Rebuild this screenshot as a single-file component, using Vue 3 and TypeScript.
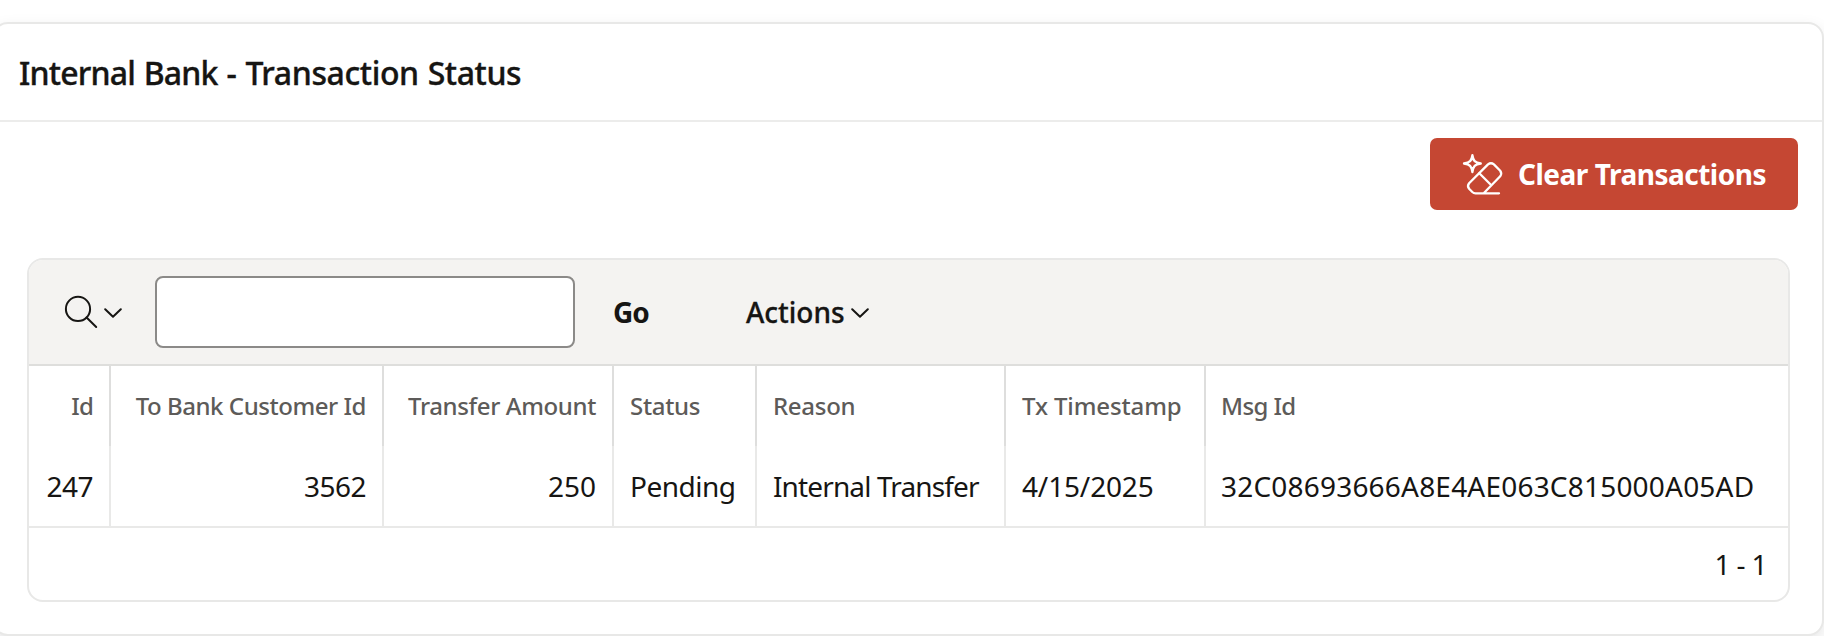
<script setup lang="ts">
interface Column {
  key: string
  label: string
  value: string
  numeric?: boolean
}

const columns: Column[] = [
  { key: 'id', label: 'Id', value: '247', numeric: true },
  { key: 'customer', label: 'To Bank Customer Id', value: '3562', numeric: true },
  { key: 'amount', label: 'Transfer Amount', value: '250', numeric: true },
  { key: 'status', label: 'Status', value: 'Pending' },
  { key: 'reason', label: 'Reason', value: 'Internal Transfer' },
  { key: 'timestamp', label: 'Tx Timestamp', value: '4/15/2025' },
  { key: 'msg', label: 'Msg Id', value: '32C08693666A8E4AE063C815000A05AD' },
]
</script>

<template>
  <main class="page">
    <section class="region">
      <header class="region-header">
        <h2><span class="bank">Internal Bank</span> - Transaction Status</h2>
      </header>
      <div class="region-actions">
        <button class="clear" type="button">
          <svg class="eraser" viewBox="0 0 44 44" aria-hidden="true">
            <path d="M12.4 2.2C13.3 8 14.8 9.6 20.8 10.5C14.8 11.4 13.3 13 12.4 19C11.5 13 10 11.4 4 10.5C10 9.6 11.5 8 12.4 2.2Z" />
            <path d="M23.7 40.3L40.2 23.3Q42.2 20.5 40.2 17.8L33.9 11.4Q31 9.2 28 11.4L9.1 30.3Q6.9 33 9.1 35.8L12.3 39Q13.7 40.3 15.5 40.3H39" />
            <path d="M19.3 20.3L30.3 31.2" />
          </svg>
          <span>Clear Transactions</span>
        </button>
      </div>
      <div class="report">
        <div class="toolbar">
          <button class="search" type="button" aria-label="Search columns">
            <svg class="glass" viewBox="0 0 34 34" aria-hidden="true">
              <circle cx="14" cy="13.9" r="12.1" />
              <path d="M22.6 22.5L32.2 32" />
            </svg>
            <svg class="chevron" viewBox="0 0 18 10" aria-hidden="true"><path d="M1.2 1.2L9 8.8L16.8 1.2" /></svg>
          </button>
          <input class="query" type="text" aria-label="Search" />
          <button class="go" type="button">Go</button>
          <button class="menu" type="button">
            Actions
            <svg class="chevron" viewBox="0 0 18 10" aria-hidden="true"><path d="M1.2 1.2L9 8.8L16.8 1.2" /></svg>
          </button>
        </div>
        <table>
          <colgroup>
            <col v-for="c in columns" :key="c.key" :class="'w-' + c.key" />
          </colgroup>
          <thead>
            <tr>
              <th v-for="c in columns" :key="c.key" :class="['h-' + c.key, { numeric: c.numeric }]">{{ c.label }}</th>
            </tr>
          </thead>
          <tbody>
            <tr>
              <td v-for="c in columns" :key="c.key" :class="['d-' + c.key, { numeric: c.numeric }]">{{ c.value }}</td>
            </tr>
          </tbody>
        </table>
        <footer class="pagination">1 - 1</footer>
      </div>
    </section>
  </main>
</template>

<style>
body {
  background: #fff;
}
</style>

<style scoped>
* {
  box-sizing: border-box;
}
.page {
  width: 1824px;
  height: 636px;
  padding-top: 22px;
  overflow: hidden;
  color: #161513;
  font-family: "Noto Sans", "Open Sans", sans-serif;
  font-size: 28px;
}
.region {
  width: 1832px;
  height: 614px;
  margin-left: -8px;
  border: 2px solid #e8e8e7;
  border-radius: 16px;
  background: #fff;
  box-shadow: 0 6px 16px rgba(0, 0, 0, 0.1);
}
.region-header {
  display: flex;
  align-items: center;
  height: 98px;
  padding-left: 25px;
  border-bottom: 2px solid #ececeb;
}
h2 {
  margin: 0;
  font-size: 32px;
  font-weight: 500;
  letter-spacing: -0.4px;
  word-spacing: 1px;
  white-space: nowrap;
  -webkit-text-stroke: 0.35px currentColor;
}
.bank {
  letter-spacing: -0.8px;
}
.region-actions {
  display: flex;
  justify-content: flex-end;
  padding: 16px 24px 48px 0;
}
button {
  display: flex;
  align-items: center;
  padding: 0;
  border: 0;
  background: none;
  color: inherit;
  font: inherit;
}
svg {
  flex: none;
  fill: none;
  stroke: currentColor;
  stroke-width: 2;
  stroke-linecap: round;
  stroke-linejoin: round;
}
.clear {
  width: 368px;
  height: 72px;
  padding-left: 30px;
  border-radius: 7px;
  background: #c54733;
  color: #fff;
  font-weight: 700;
  letter-spacing: -0.49px;
  white-space: nowrap;
}
.eraser {
  width: 44px;
  height: 44px;
  margin: 1px 14px 0 0;
  stroke-width: 2.3;
}
.report {
  width: 1763px;
  height: 344px;
  margin-left: 33px;
  border: 2px solid #e8e8e7;
  border-radius: 16px;
  overflow: hidden;
}
.toolbar {
  display: flex;
  align-items: center;
  height: 106px;
  border-bottom: 2px solid #dededc;
  background: #f4f3f1;
}
.search {
  width: 91px;
  margin-left: 35px;
}
.glass {
  width: 34px;
  height: 34px;
}
.chevron {
  width: 18px;
  height: 10px;
  margin: 2px 0 0 6px;
}
.query {
  width: 420px;
  height: 72px;
  border: 2px solid #8b8a88;
  border-radius: 8px;
  background: #fff;
}
.go {
  width: 133px;
  padding-left: 38px;
  font-weight: 700;
  letter-spacing: -1px;
}
.menu {
  padding-left: 38px;
  font-weight: 500;
  -webkit-text-stroke: 0.3px currentColor;
}
.menu .chevron {
  margin-left: 6px;
}
table {
  width: 1759px;
  table-layout: fixed;
  border-collapse: separate;
  border-spacing: 0;
}
.w-id { width: 82px; }
.w-customer { width: 273px; }
.w-amount { width: 230px; }
.w-status { width: 143px; }
.w-reason { width: 249px; }
.w-timestamp { width: 200px; }
th,
td {
  height: 80px;
  padding: 0 16px;
  border-right: 2px solid #e9e9e8;
  text-align: left;
  white-space: nowrap;
}
th {
  padding-bottom: 2px;
  border-right-color: #dededd;
  color: #5d5b59;
  font-size: 24px;
  font-weight: 500;
}
td {
  height: 82px;
  border-bottom: 2px solid #e9e9e8;
}
th:last-child,
td:last-child {
  padding-left: 15px;
  border-right: 0;
}
.numeric {
  text-align: right;
}
.h-id { letter-spacing: -0.8px; }
.h-customer { letter-spacing: -0.45px; }
.h-amount { letter-spacing: -0.37px; }
.h-status,
.h-reason { letter-spacing: -0.3px; }
.h-timestamp { letter-spacing: -0.12px; }
.h-msg { letter-spacing: -0.6px; }
.d-id,
.d-customer { letter-spacing: -0.5px; }
.d-status { letter-spacing: -0.5px; }
.d-reason { letter-spacing: -0.87px; }
.d-timestamp { letter-spacing: -0.15px; }
.d-msg { letter-spacing: 0.2px; }
.pagination {
  display: flex;
  align-items: center;
  justify-content: flex-end;
  height: 72px;
  padding-right: 21px;
  letter-spacing: -0.6px;
}
</style>
